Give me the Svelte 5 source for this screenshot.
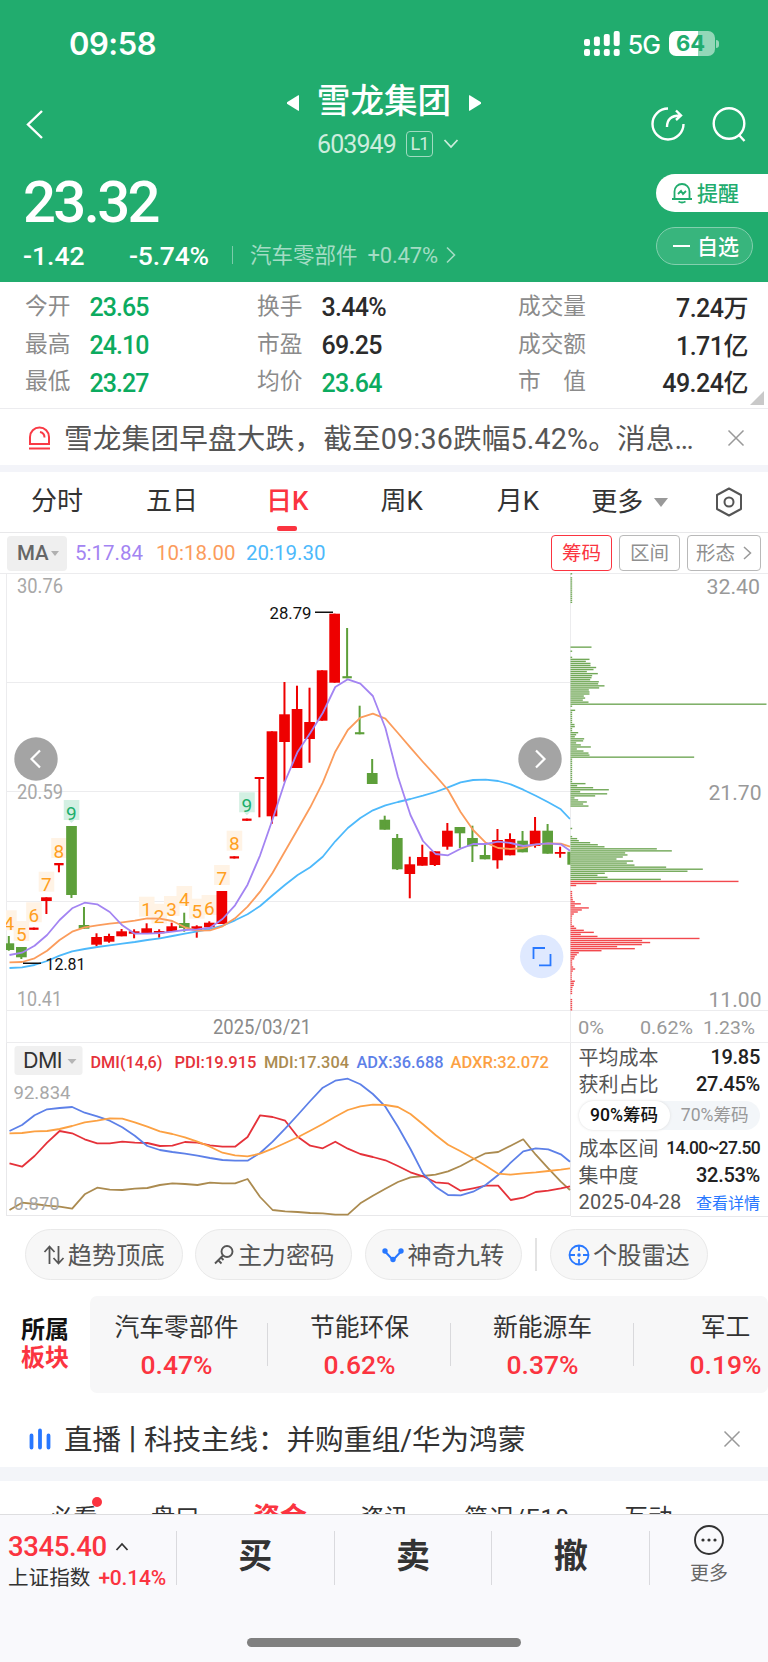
<script>
	const quotes = [
		[['今开', '23.65', true], ['换手', '3.44%'], ['成交量', '7.24万']],
		[['最高', '24.10', true], ['市盈', '69.25'], ['成交额', '1.71亿']],
		[['最低', '23.27', true], ['均价', '23.64', true], ['市　值', '49.24亿']]
	];
	const sectors = [
		{ name: '汽车零部件', pct: '0.47%' },
		{ name: '节能环保', pct: '0.62%' },
		{ name: '新能源车', pct: '0.37%' },
		{ name: '军工', pct: '0.19%' }
	];

	// body top, body bottom, high, low, up
	const candles = [
		[943.3, 950, 936, 950.7, 0],
		[947, 957.3, 947, 959, 0],
		[927.6, 929.8, 927.6, 929.8, 1],
		[897.3, 901, 897.3, 914, 1],
		[863, 865.3, 863, 872.3, 1],
		[826, 895, 826, 898, 0],
		[925, 928.7, 907, 928.7, 0],
		[937, 944.7, 933.3, 946.3, 1],
		[936, 941.7, 933.7, 942.7, 1],
		[931.3, 936.3, 929, 936.3, 1],
		[931.3, 933.7, 929.3, 938.3, 1],
		[928.3, 933, 923.3, 933, 1],
		[931, 933.3, 929.3, 937.7, 1],
		[926.3, 932, 922.7, 932, 1],
		[923, 928, 912.7, 931.7, 0],
		[926.3, 930.3, 925.3, 937.7, 1],
		[922.7, 927.3, 921.3, 927.3, 1],
		[891, 924, 891, 924, 1],
		[856.3, 858.5, 856.3, 858.5, 1],
		[818.6, 820.8, 818.6, 820.8, 1],
		[777, 779, 777, 817.3, 1],
		[731.3, 816.3, 731.3, 823.7, 1],
		[714.3, 742, 682, 781.7, 1],
		[709, 768, 685.7, 768, 1],
		[722, 739, 687.7, 762.7, 1],
		[670.3, 720.7, 670.3, 720.7, 1],
		[613.7, 682.7, 613.7, 682.7, 1],
		[676.2, 678.3, 628, 678.3, 0],
		[732.2, 734.3, 705.7, 734.3, 0],
		[773, 784, 759, 784, 0],
		[819.7, 829.7, 815.7, 829.7, 0],
		[838, 869.3, 834, 870, 0],
		[864.3, 874, 856.7, 898.3, 1],
		[857, 865.7, 844.7, 865.7, 1],
		[851.3, 865, 851.3, 866, 1],
		[830.7, 846.7, 823, 849.7, 1],
		[827, 833.3, 827, 848, 0],
		[838, 846.3, 825.7, 862, 0],
		[855, 859.3, 844.7, 859.3, 0],
		[840, 860.3, 829, 868.7, 1],
		[839, 855.3, 833.3, 855.3, 1],
		[840.7, 852.3, 831, 852.3, 0],
		[830.7, 846, 817, 847.7, 1],
		[830.7, 853.7, 824, 853.7, 0],
		[852, 853.8, 846.7, 857.7, 1],
		[851.7, 864.7, 851.7, 864.7, 0]
	];
	const cx = (i) => 8.8 + 12.53 * i;
	const thin = (c) => c[1] - c[0] < 2.5 && c[0] !== 852 && c[0] !== 931.3 && c[0] !== 931;
	const line = (ys) => ys.map((y, i) => `${Math.min(cx(i) + 0.7, 570)},${y}`).join(' ');
	const scaled = (ys) => ys.map((y) => +(1030 + y / 3).toFixed(1));

	const ma5 = [955, 952.7, 945.7, 935, 920, 908.3, 902.7, 904.3, 912, 925.3, 933.7, 933.7, 933, 931.7, 930, 929.3, 927.7, 919, 905.3, 884.7, 855.3, 819.3, 781, 751.7, 733, 713, 687, 679.3, 683.7, 696, 728, 776.7, 815, 841, 854, 855.3, 848.7, 844, 844, 841.7, 843, 846, 844.3, 843.3, 844.3, 850.7];
	const ma10 = [962.3, 962, 958.3, 950.7, 940, 931.7, 927.3, 925.3, 923.7, 922.3, 920.7, 918.3, 918.7, 921, 927.3, 930.7, 930.3, 926.3, 918.3, 906.7, 891.7, 872.7, 851, 829.3, 807.3, 782.7, 751.7, 730, 717.7, 713.7, 718.7, 733, 747.7, 762, 775.7, 790, 812, 830, 842.7, 848, 849, 848, 844.7, 843.3, 843.7, 846.7];
	const ma20 = [968, 967.3, 965, 961, 955.7, 951.3, 949, 947, 945.3, 943.7, 942, 940, 938.3, 936, 933.7, 931.3, 929, 925.7, 920.3, 914.3, 906, 895.3, 884.7, 875, 867.3, 856.7, 841.3, 828, 818, 810.3, 805.3, 802, 799, 795.7, 792, 787.3, 782.3, 780, 779.7, 781, 784.3, 789.7, 795.7, 802.3, 809.3, 819];

	const dmi = [
		{ color: '#ab8b50', ys: [540, 518, 522, 527, 530, 536, 493, 473, 479, 480, 476, 474, 465, 460, 462, 465, 458, 460, 460, 447, 501, 540, 544, 546, 549, 550, 554, 554, 520, 497, 476, 456, 442, 438, 434, 424, 408, 388, 370, 366, 347, 328, 374, 415, 455, 480] },
		{ color: '#e5323a', ys: [400, 410, 378, 338, 303, 310, 328, 340, 340, 335, 338, 339, 348, 347, 336, 338, 346, 350, 350, 321, 256, 261, 272, 320, 347, 355, 335, 356, 372, 381, 391, 408, 427, 439, 457, 460, 482, 475, 467, 467, 510, 503, 486, 482, 475, 469] },
		{ color: '#5d80e8', ys: [303, 285, 256, 238, 234, 231, 248, 259, 272, 292, 317, 348, 360, 366, 371, 377, 384, 390, 392, 392, 369, 335, 296, 255, 213, 173, 152, 146, 163, 192, 230, 290, 357, 430, 470, 495, 496, 485, 465, 435, 398, 364, 355, 358, 373, 395] },
		{ color: '#fca143', ys: [310, 309, 304, 303, 297, 288, 277, 272, 265, 266, 277, 290, 304, 312, 322, 335, 350, 368, 376, 379, 371, 356, 339, 322, 302, 282, 260, 240, 229, 224, 225, 231, 252, 283, 315, 344, 364, 385, 407, 431, 434, 430, 427, 423, 419, 415] }
	];

	// nine-turn counters: candle index, number, text centre
	const marks = [
		[0, 4, 923.3], [1, 5, 934], [2, 6, 915.3], [3, 7, 884.7], [4, 8, 851], [5, 9, 813],
		[11, 1, 909.7], [12, 2, 916.7], [13, 3, 909], [14, 4, 899], [15, 5, 911.7], [16, 6, 908],
		[17, 7, 878], [18, 8, 843.7], [19, 9, 805.3]
	];

	// cost distribution, grouped by starting price step
	const chipGroups = [
		[0, [5]],
		[2, Array(13).fill(5)],
		[36, [63, 0, 5, 0, 0, 5, 57, 46, 60, 60, 77, 69, 49, 82, 65, 63, 59, 85, 83, 102, 86, 55, 57, 57, 40, 44, 37, 54, 588, 5, 0, 14, 5, 5, 5, 5, 5, 5, 12, 13, 5, 5, 23, 17, 13, 41, 38, 17, 31, 61, 19, 39, 54, 57, 371]],
		[91, Array(12).fill(5)],
		[103, [45, 20, 68, 115, 29, 110, 74, 12, 23, 49, 38, 54]],
		[125, [5, 0, 0, 0, 5, 20, 25, 59, 82, 102, 259, 304, 164, 171, 157, 138, 188, 169, 192, 287, 397, 351, 103, 81, 111, 271, 504, 78, 17]],
		[156, [5, 5, 5, 6, 7, 13, 31, 13, 55, 34, 22, 10, 5, 4, 4, 4, 4, 11, 17, 40, 70, 31, 81, 387, 215, 239, 214, 140, 193, 93, 25, 19, 13, 11, 5, 5, 5, 8, 14, 7, 4, 4, 4, 4, 13, 10, 10, 6, 5, 5, 5]],
		[209, Array(6).fill(5)]
	];
	const chips = chipGroups.flatMap(([start, widths]) =>
		widths.map((w, n) => ({ k: start + n, w: w / 3 }))
	);
</script>

{#snippet label(text, x, y, size, width, fill, weight)}
	<text {x} {y} {fill} font-size={size} textLength={width} lengthAdjust="spacingAndGlyphs" font-weight={weight ?? 400}>{text}</text>
{/snippet}

<div class="page">
	<header>
		<div class="status">
			<span class="clock">09:58</span>
			<div class="status-right">
				<svg class="signal" width="36" height="26" viewBox="0 0 36 26">
					{#each [8, 5.5, 3, 0] as top, i}
						<rect x={i * 9.9} y={top} width="6" height={15 - top} rx="2" />
						<rect x={i * 9.9} y="18" width="6" height="7" rx="2" />
					{/each}
				</svg>
				<span class="net">5G</span>
				<div class="battery">64</div>
				<i class="nub"></i>
			</div>
		</div>
		<nav>
			<svg class="back" width="20" height="32" viewBox="0 0 20 32"><path d="M17 3L3 16.500L17 30" /></svg>
			<div class="title">
				<div class="name">
					<svg width="12" height="16" viewBox="0 0 12 16"><path d="M11.500 1.500v13L1 8z" fill="#fff" stroke="#fff" stroke-linejoin="round" /></svg>
					<h1>雪龙集团</h1>
					<svg width="12" height="16" viewBox="0 0 12 16"><path d="M.5 1.500v13L11 8z" fill="#fff" stroke="#fff" stroke-linejoin="round" /></svg>
				</div>
				<div class="code">
					<span>603949</span><b>L1</b>
					<svg width="16" height="12" viewBox="0 0 16 12"><path d="M1.500 2L8 9L14.500 2" /></svg>
				</div>
			</div>
			<div class="actions">
				<svg width="36" height="38" viewBox="0 0 36 38"><path d="M18 3.500A15.500 15.500 0 1 0 33.500 19M17 22C17 14 21 10.500 30 10.500M26 5.500L31 10.500L26 15" /></svg>
				<svg width="36" height="38" viewBox="0 0 36 38"><circle cx="18" cy="18.500" r="15.300" /><path d="M28 30L33.500 36" /></svg>
			</div>
		</nav>
		<div class="price-area">
			<div class="price-left">
				<div class="price">23.32</div>
				<div class="change">
					<span class="diff">-1.42</span><span class="rate">-5.74%</span><i></i>
					<span class="industry">汽车零部件</span><span class="industry-rate">+0.47%</span>
					<svg width="12" height="18" viewBox="0 0 12 18"><path d="M2 1.500L9.500 9L2 16.500" /></svg>
				</div>
			</div>
			<div class="price-right">
				<div class="remind">
					<svg width="22" height="22" viewBox="0 0 22 22"><path d="M3.500 16V9.500a7.500 7.500 0 0 1 15 0V16M1 17h20M7.500 19.500q3.500 2 7 0M7 12l3-3 2 3 3-3" /></svg>
					<span>提醒</span>
				</div>
				<div class="watch"><i></i><span>自选</span></div>
			</div>
		</div>
	</header>

	<section class="quotes">
		{#each quotes as row}
			<div class="quote-row">
				{#each row as [name, value, down]}
					<div class="quote"><span>{name}</span><b class:down>{value}</b></div>
				{/each}
			</div>
		{/each}
		<i class="corner"></i>
	</section>

	<section class="news">
		<svg width="23" height="24" viewBox="0 0 23 24" class="alarm"><path d="M2 18V11a9.500 9.500 0 0 1 19 0v7zM1 22.500h21M12 6q4.500 1 4.500 5.500" /></svg>
		<p>雪龙集团早盘大跌，截至09:36跌幅5.42%。消息…</p>
		<svg class="close" width="18" height="18" viewBox="0 0 18 18"><path d="M1.500 1.500l15 15M16.500 1.500l-15 15" /></svg>
	</section>

	<section class="periods">
		<span>分时</span><span>五日</span><span class="on">日K</span><span>周K</span><span>月K</span>
		<span class="more">更多<i></i></span>
		<svg width="28" height="30" viewBox="0 0 28 30"><path d="M14 1.500L26 8v14L14 28.500L2 22V8z" stroke-linejoin="round" /><circle cx="14" cy="15" r="4.500" /></svg>
	</section>

	<section class="ma-bar">
		<div class="select">MA<i></i></div>
		<span class="ma5">5:17.84</span><span class="ma10">10:18.00</span><span class="ma20">20:19.30</span>
		<div class="chip-tabs">
			<span class="on">筹码</span><span>区间</span>
			<span>形态<svg width="9" height="16" viewBox="0 0 9 16"><path d="M1 2l6.500 6L1 14" /></svg></span>
		</div>
	</section>

	<section class="charts">
		<svg width="768" height="470" viewBox="0 573 768 470">
			<g stroke="#ececee">
				<path d="M0 573.500H768M6 682.500H570M6 791.500H570M6 901.500H570M6 1010.500H768M6 1042.500H768M6.500 573V1043M570.500 573V1043" />
			</g>
			{@render label('30.76', 17, 593, 19.5, 46, '#a8a8a8')}
			{@render label('20.59', 17, 799, 19.5, 46, '#a8a8a8')}
			{@render label('10.41', 17, 1005.7, 19.5, 45, '#a8a8a8')}
			<clipPath id="plot"><rect x="6" y="573" width="564.500" height="470" /></clipPath>
			<g clip-path="url(#plot)">
				{#each marks as [i, n, y]}
					<rect x={cx(i) - 7.7} y={y - 13} width="15.600" height="20" fill={n === 9 ? '#d3f0e3' : '#fff3e5'} />
					{#if n === 9}<path d={`M${cx(i) - 3} ${y + 7}h6l-3 3z`} fill="#d3f0e3" />{/if}
				{/each}
				{#each candles as c, i}
					<g fill={c[4] ? '#ee0000' : '#5d9f3a'}>
						<rect x={cx(i) - (thin(c) ? 4.7 : 5.3)} y={c[0]} width={thin(c) ? 9.4 : 10.7} height={c[1] - c[0]} />
						<rect x={cx(i) - 1} y={c[2]} width="2" height={c[3] - c[2]} />
					</g>
				{/each}
				{#each marks as [i, n, y]}
					<text x={cx(i)} y={y + 6.5} text-anchor="middle" font-size="19" fill={n === 9 ? '#1cae6b' : '#ff9f1f'}>{n}</text>
				{/each}
				<g fill="none" stroke-width="1.800" stroke-linejoin="round">
					<polyline points={line(ma20)} stroke="#4db9fb" />
					<polyline points={line(ma10)} stroke="#fb9c5c" />
					<polyline points={line(ma5)} stroke="#a384f2" />
				</g>
			</g>
			<path d="M315 612.300H333M23 963.300H41" stroke="#111" stroke-width="1.600" />
			{@render label('28.79', 269.5, 618.8, 17, 42, '#111')}
			{@render label('12.81', 45.5, 969.8, 17, 40, '#111')}
			{@render label('2025/03/21', 213, 1034, 19.5, 98, '#8a8a8a')}

			{#each chips as { k, w }}
				<rect x="570.500" y={573.1 + k * 2.0373} width={w} height="1.400" fill={k > 150 ? '#f2494e' : '#72a858'} />
			{/each}
			{@render label('32.40', 706.5, 594, 21, 53.5, '#999')}
			{@render label('21.70', 708.5, 800, 21, 53, '#999')}
			{@render label('11.00', 708.5, 1006.7, 21, 53, '#999')}
			{@render label('0%', 578, 1034, 19, 26, '#999')}
			{@render label('0.62%', 640, 1034, 19, 53, '#999')}
			{@render label('1.23%', 703, 1034, 19, 52, '#999')}

			<circle cx="36" cy="759" r="21.700" fill="#a4a4a4" />
			<circle cx="540" cy="759" r="21.700" fill="#a4a4a4" />
			<path d="M40 750.500L31.500 759L40 767.500M536 750.500L544.500 759L536 767.500" fill="none" stroke="#fff" stroke-width="2.200" />
			<circle cx="541.700" cy="956.500" r="21.700" fill="#dfe9ff" />
			<path d="M545 948H533.500V959M550.500 954V965.300H539" fill="none" stroke="#2878ff" stroke-width="1.800" />
		</svg>
	</section>

	<section class="lower">
		<svg width="571" height="174" viewBox="0 1043 571 174">
			<path d="M6.500 1043V1216M570.500 1043V1216M6 1215.500H571" stroke="#e8e8ea" />
			<rect x="14.500" y="1046" width="68" height="29" rx="3" fill="#f0f0f0" />
			<path d="M67.500 1059h9l-4.500 5z" fill="#b5b5b5" />
			<text x="23" y="1067.500" font-size="21.500" textLength="39.500" fill="#333" class="sf">DMI</text>
			{@render label('DMI(14,6)', 90.5, 1068, 16.5, 72, '#e5323a', 500)}
			{@render label('PDI:19.915', 174.5, 1068, 16.5, 82, '#e5323a', 500)}
			{@render label('MDI:17.304', 264, 1068, 16.5, 85, '#ab8b50', 500)}
			{@render label('ADX:36.688', 356.5, 1068, 16.5, 87, '#5d80e8', 500)}
			{@render label('ADXR:32.072', 450.5, 1068, 16.5, 98.5, '#fca143', 500)}
			{#each dmi as d}
				<polyline points={line(scaled(d.ys))} fill="none" stroke={d.color} stroke-width="1.800" stroke-linejoin="round" />
			{/each}
			{@render label('92.834', 13.5, 1099, 19, 57, '#a8a8a8')}
			{@render label('0.870', 13.5, 1209.5, 19, 46, '#a8a8a8')}
		</svg>
		<aside>
			<div class="cost"><span>平均成本</span><b>19.85</b></div>
			<div class="cost"><span>获利占比</span><b>27.45%</b></div>
			<div class="toggle"><b>90%筹码</b><span>70%筹码</span></div>
			<div class="cost"><span>成本区间</span><b class="range">14.00~27.50</b></div>
			<div class="cost"><span>集中度</span><b>32.53%</b></div>
			<div class="cost"><em>2025-04-28</em><a href="#detail">查看详情</a></div>
		</aside>
	</section>

	<section class="tools">
		<div>
			<svg width="22" height="22" viewBox="0 0 22 22"><path d="M6.500 20V3M1.500 8l5-5.500L11.500 8M15.500 2v17M10.500 14l5 5.500 5-5.500" stroke="#555" stroke-width="1.800" /></svg><span>趋势顶底</span>
		</div>
		<div>
			<svg width="22" height="22" viewBox="0 0 22 22"><g stroke="#555" stroke-width="1.900"><circle cx="14" cy="7.500" r="5.500" /><path d="M10 11.500L2 19.500M5 16l3.500 3.500M8 13.500l2.500 2.500" /></g></svg><span>主力密码</span>
		</div>
		<div>
			<svg width="22" height="22" viewBox="0 0 22 22"><path d="M3 7.500L11 16L19 7.500" stroke="#2878ff" stroke-width="2" /><g fill="#2878ff"><circle cx="3" cy="7" r="2.700" /><circle cx="11" cy="15.500" r="2.700" /><circle cx="19" cy="7" r="2.700" /></g></svg><span>神奇九转</span>
		</div>
		<i></i>
		<div>
			<svg width="22" height="22" viewBox="0 0 22 22"><g stroke="#2878ff" stroke-width="1.800"><circle cx="11" cy="11" r="9.500" /><path d="M11 1v6M11 15v6M1 11h6M15 11h6" /></g><circle cx="11" cy="11" r="1.800" fill="#2878ff" /></svg><span>个股雷达</span>
		</div>
	</section>

	<section class="sectors">
		<div class="sector-title">所属<b>板块</b></div>
		<div class="sector-list">
			{#each sectors as s}
				<div class="sector"><span>{s.name}</span><b>{s.pct}</b></div>
			{/each}
		</div>
	</section>

	<section class="live">
		<svg width="22" height="22" viewBox="0 0 22 22"><path d="M2.500 7.500V19.500M11 2.500V19.500M19.500 7.500V19.500" stroke="#2878ff" stroke-width="3.800" stroke-linecap="round" /></svg>
		<p>直播<span>丨</span>科技主线：并购重组/华为鸿蒙</p>
		<svg class="close" width="18" height="18" viewBox="0 0 18 18"><path d="M1.500 1.500l15 15M16.500 1.500l-15 15" /></svg>
	</section>

	<section class="tabs">
		<span class="dot">必看</span><span>盘口</span><span class="on">资金</span><span>资讯</span><span>简况/F10</span><span>互动</span>
	</section>

	<footer>
		<div class="bar">
			<div class="index">
				<div class="points">3345.40<svg width="14" height="10" viewBox="0 0 14 10"><path d="M1.500 8L7 2L12.500 8" /></svg></div>
				<div class="sub">上证指数<b>+0.14%</b></div>
			</div>
			<div class="trade">买</div>
			<div class="trade">卖</div>
			<div class="trade">撤</div>
			<div class="menu">
				<svg width="32" height="32" viewBox="0 0 32 32"><circle cx="16" cy="16" r="14" /><g fill="#333" stroke="none"><circle cx="10" cy="16" r="1.600" /><circle cx="16" cy="16" r="1.600" /><circle cx="22" cy="16" r="1.600" /></g></svg>
				更多
			</div>
		</div>
		<i class="home"></i>
	</footer>
</div>

<style>
	:global(body) {
		margin: 0;
		background: #fff;
	}
	.page {
		width: 768px;
		height: 1662px;
		overflow: hidden;
		display: flex;
		flex-direction: column;
		font-family: Roboto, 'Noto Sans CJK SC', sans-serif;
		color: #333;
	}
	.page * {
		box-sizing: border-box;
	}
	.page > * {
		flex: none;
	}
	svg {
		display: block;
		fill: none;
		flex: none;
	}
	b,
	em {
		font-weight: 500;
		font-style: normal;
	}
	p,
	h1 {
		margin: 0;
	}
	.sf {
		font-family: Inter, sans-serif;
	}

	header {
		height: 282px;
		background: #21ac6e;
		color: #fff;
	}
	header svg {
		stroke: #fff;
		stroke-width: 2.4;
	}
	.status {
		height: 87px;
		display: flex;
		justify-content: space-between;
		align-items: center;
		padding: 0 49px 0 69px;
		font-family: Inter, sans-serif;
	}
	.status .signal {
		fill: #fff;
		stroke: none;
	}
	.clock {
		font-size: 31px;
		font-weight: 600;
		letter-spacing: -0.5px;
	}
	.status-right {
		display: flex;
		align-items: center;
	}
	.net {
		font-size: 25px;
		font-weight: 500;
		margin: 2px 9px 0 8px;
		letter-spacing: -1px;
	}
	.battery {
		width: 46px;
		height: 25px;
		border-radius: 7px;
		background: linear-gradient(90deg, #fff 62%, #93d7b8 62%);
		color: #21ac6e;
		font-size: 22px;
		font-weight: 700;
		line-height: 25px;
		text-align: center;
		padding-right: 3px;
	}
	.nub {
		width: 3px;
		height: 8px;
		border-radius: 0 3px 3px 0;
		background: #93d7b8;
		margin-left: 1px;
	}
	nav {
		height: 85px;
		display: grid;
		grid-template-columns: 1fr 300px 1fr;
	}
	.back {
		margin: 21px 0 0 25px;
	}
	.name {
		display: flex;
		justify-content: center;
		align-items: center;
		gap: 18px;
		height: 31px;
	}
	h1 {
		font-size: 33.6px;
		font-weight: 500;
		line-height: 29px;
		padding-bottom: 2px;
	}
	.code {
		display: flex;
		align-items: center;
		height: 28px;
		margin: 12px 0 0 83px;
		color: #cdeddd;
		font-size: 25px;
		letter-spacing: -0.9px;
	}
	.code b {
		width: 27px;
		height: 26px;
		margin: 0 10px 0 10px;
		border: 1.5px solid #9fdbc0;
		border-radius: 4px;
		font-size: 18px;
		line-height: 23px;
		text-align: center;
		font-weight: 400;
	}
	.code svg {
		stroke: #cdeddd;
		stroke-width: 1.8;
	}
	.actions {
		display: flex;
		justify-content: flex-end;
		gap: 25px;
		padding: 18px 21px 0 0;
	}
	.price-area {
		display: flex;
		justify-content: space-between;
	}
	.price-left {
		padding-left: 23px;
	}
	.price {
		font-size: 58px;
		font-weight: 500;
		line-height: 60px;
		letter-spacing: -2.6px;
	}
	.change {
		display: flex;
		align-items: center;
		height: 40px;
		font-size: 26.5px;
		font-weight: 500;
		margin-top: 3px;
		white-space: nowrap;
	}
	.diff {
		width: 106px;
	}
	.rate {
		width: 84px;
		letter-spacing: -0.2px;
	}
	.change i {
		width: 1px;
		height: 18px;
		background: #7accaa;
		margin: 0 17px 0 19px;
	}
	.industry,
	.industry-rate {
		font-size: 21.5px;
		font-weight: 400;
		color: #a3dcc4;
	}
	.industry {
		padding-bottom: 4px;
	}
	.industry-rate {
		font-size: 22px;
		margin: 0 7px 0 10px;
		letter-spacing: -0.2px;
	}
	.change svg {
		stroke: #a3dcc4;
		stroke-width: 1.6;
	}
	.price-right {
		width: 112px;
	}
	.remind,
	.watch {
		height: 38px;
		display: flex;
		align-items: center;
		font-size: 21px;
		font-weight: 500;
	}
	.remind span,
	.watch span {
		padding-bottom: 3px;
	}
	.remind {
		margin-top: 2px;
		padding-left: 15px;
		gap: 4px;
		border-radius: 19px 0 0 19px;
		background: #fff;
		color: #21ac6e;
	}
	.remind svg {
		stroke: #21ac6e;
		stroke-width: 1.8;
	}
	.watch {
		margin-top: 15px;
		width: 97px;
		padding-left: 16px;
		gap: 7px;
		border: 1px solid #83cfae;
		border-radius: 19px;
		background: #38b57d;
	}
	.watch i {
		width: 17px;
		height: 2px;
		background: #fff;
	}

	.quotes {
		position: relative;
		height: 127px;
		padding-top: 5px;
		border-bottom: 1.5px solid #ececef;
	}
	.quote-row {
		display: grid;
		grid-template-columns: 232px 261px 230px;
		height: 37.8px;
		padding-left: 25px;
	}
	.quote {
		display: flex;
		align-items: center;
		font-size: 22.7px;
		color: #8b8b8b;
	}
	.quote span {
		padding-bottom: 3px;
	}
	.quote b {
		margin-left: 19px;
		font-size: 25px;
		letter-spacing: -0.9px;
		color: #2b2b2b;
		padding-top: 4px;
	}
	.quote:nth-child(2) b {
		letter-spacing: -0.7px;
	}
	.quote:last-child b {
		margin-left: auto;
		padding-top: 0;
		letter-spacing: -0.5px;
	}
	.quote b.down {
		color: #0cab5f;
	}
	.corner {
		position: absolute;
		right: 4px;
		bottom: 3px;
		border-left: 14px solid transparent;
		border-bottom: 14px solid #c9c9c9;
	}
	.news,
	.live {
		display: flex;
		align-items: center;
		font-size: 28.6px;
	}
	.news {
		height: 56px;
		padding: 1px 23px 0 28px;
		color: #555;
	}
	.alarm {
		stroke: #f93a45;
		stroke-width: 2;
	}
	.news p {
		margin-left: 13px;
		padding-bottom: 3px;
		letter-spacing: 0.2px;
	}
	.close {
		margin-left: auto;
		stroke: #999;
		stroke-width: 1.5;
	}

	.periods {
		height: 68px;
		display: flex;
		align-items: center;
		padding: 0 25px 0 31px;
		border-top: 7px solid #f3f4f9;
		border-bottom: 1.5px solid #e8e8ea;
		font-size: 26px;
	}
	.periods span {
		height: 100%;
		line-height: 59px;
		white-space: nowrap;
	}
	.periods span:nth-child(2) {
		margin-left: 63px;
	}
	.periods span:nth-child(3) {
		margin-left: 68px;
	}
	.periods span:nth-child(4) {
		margin-left: 72px;
	}
	.periods span:nth-child(5) {
		margin-left: 74px;
	}
	.periods .more {
		display: flex;
		align-items: center;
		gap: 11px;
		margin-left: 52px;
	}
	.more i {
		border: 7px solid transparent;
		border-top: 9px solid #999;
		border-bottom: 0;
	}
	.periods svg {
		margin-left: auto;
		stroke: #555;
		stroke-width: 2;
	}
	.periods .on {
		position: relative;
		color: #fb3440;
		font-weight: 500;
	}
	.on::after {
		content: '';
		position: absolute;
		left: 11px;
		bottom: 1px;
		width: 20px;
		height: 5px;
		border-radius: 2px;
		background: #fb3440;
	}

	.ma-bar {
		height: 40px;
		display: flex;
		align-items: center;
		padding: 0 7px;
		font-size: 20.5px;
	}
	.select {
		display: flex;
		align-items: center;
		gap: 2px;
		width: 60px;
		height: 35px;
		margin-right: 8px;
		padding-left: 10px;
		border-radius: 4px;
		background: #efefef;
		color: #666;
		font-size: 20.5px;
		font-weight: 500;
	}
	.select i {
		border: 4px solid transparent;
		border-top: 5px solid #b0b0b0;
		border-bottom: 0;
	}
	.ma5 {
		color: #a384f2;
		width: 81px;
	}
	.ma10 {
		color: #fb9c5c;
		width: 90px;
	}
	.ma20 {
		color: #4db9fb;
	}
	.chip-tabs {
		display: flex;
		gap: 7px;
		margin-left: auto;
	}
	.chip-tabs span {
		display: flex;
		align-items: center;
		justify-content: center;
		width: 61px;
		height: 36px;
		padding-bottom: 3px;
		border: 1.5px solid #b9b9b9;
		border-radius: 4px;
		font-size: 19.5px;
		color: #8f8f8f;
	}
	.chip-tabs span:last-child {
		width: 74px;
		gap: 8px;
	}
	.chip-tabs .on {
		position: static;
		color: #fb3440;
		border-color: #fb3440;
	}
	.chip-tabs .on::after {
		display: none;
	}
	.chip-tabs svg {
		stroke: #999;
		stroke-width: 1.5;
		margin-top: 2px;
	}
	.charts {
		height: 470px;
	}

	.lower {
		height: 174px;
		display: flex;
	}
	aside {
		flex: 1;
		padding: 0 8px 0 7.5px;
		border-bottom: 1.5px solid #e8e8ea;
	}
	.cost {
		display: flex;
		justify-content: space-between;
		align-items: center;
		height: 27px;
		font-size: 20px;
		color: #555;
		white-space: nowrap;
	}
	.cost b {
		color: #222;
		letter-spacing: -0.3px;
	}
	.cost .range {
		font-size: 17.5px;
		letter-spacing: -0.65px;
	}
	.cost em {
		font-weight: 400;
		font-size: 20px;
		letter-spacing: 0.2px;
	}
	.cost a {
		font-size: 16px;
		color: #2878ff;
		text-decoration: none;
	}
	.toggle {
		display: flex;
		height: 29px;
		margin: 4px 0;
		border-radius: 15px;
		background: #f3f6f9;
		font-size: 17.6px;
		line-height: 28px;
		text-align: center;
		color: #999;
		white-space: nowrap;
	}
	.toggle b {
		width: 91px;
		border-radius: 15px;
		background: #fff;
		box-shadow: 0 0 3px #ddd;
		color: #111;
	}
	.toggle span {
		flex: 1;
	}

	.tools {
		height: 76px;
		padding: 12px 0 0 25px;
		display: flex;
		gap: 12.3px;
		font-size: 24.2px;
		color: #555;
	}
	.tools div {
		width: 157.5px;
		height: 51px;
		display: flex;
		align-items: center;
		justify-content: center;
		gap: 3px;
		border: 1px solid #e9e9e9;
		border-radius: 26px;
		background: #f7f7f7;
	}
	.tools span {
		padding-bottom: 2px;
	}
	.tools i {
		width: 1.5px;
		height: 33px;
		margin: 9px 1px 0 1px;
		background: #e3e3e3;
	}

	.sectors {
		height: 104px;
		display: flex;
		padding-top: 3px;
	}
	.sector-title {
		width: 90px;
		padding: 20px 0 0 21px;
		font-size: 24px;
		font-weight: 700;
		line-height: 28px;
		color: #111;
	}
	.sector-title b {
		display: block;
		font-weight: 700;
		color: #fb3440;
	}
	.sector-list {
		width: 678px;
		height: 97px;
		display: flex;
		overflow: hidden;
		border-radius: 7px;
		background: #f7f7f8;
	}
	.sector {
		position: relative;
		flex: none;
		width: 183px;
		text-align: center;
		font-size: 24.8px;
		line-height: 36px;
		padding-top: 14px;
	}
	.sector:first-child {
		margin-left: -5px;
	}
	.sector:not(:last-child)::after {
		content: '';
		position: absolute;
		right: 0;
		top: 27px;
		width: 1.5px;
		height: 43px;
		background: #d9d9dc;
	}
	.sector b {
		display: block;
		font-size: 26.5px;
		letter-spacing: 0;
		color: #fb3440;
		padding-top: 1px;
	}

	.live {
		height: 70px;
		padding: 13px 27px 0 29px;
		color: #333;
	}
	.live p {
		margin-left: 13px;
		padding-bottom: 2px;
		letter-spacing: -0.12px;
	}
	.live p span {
		margin: 0 -2.7px;
	}
	.tabs {
		height: 47px;
		border-top: 14px solid #f3f5f9;
		display: flex;
		padding: 20px 0 0 49px;
		font-size: 24.2px;
		line-height: 34px;
		overflow: hidden;
		white-space: nowrap;
	}
	.tabs span {
		position: relative;
		width: 104px;
	}
	.tabs span:first-child,
	.tabs span:nth-child(2) {
		width: 102px;
	}
	.tabs span:nth-child(3) {
		width: 107px;
	}
	.tabs span:nth-child(5) {
		width: 160px;
		letter-spacing: 1.2px;
	}
	.tabs .on {
		font-size: 27px;
		font-weight: 700;
		color: #fb3440;
	}
	.tabs .on::after {
		display: none;
	}
	.dot::before {
		content: '';
		position: absolute;
		left: 43px;
		top: -4px;
		width: 10px;
		height: 10px;
		border-radius: 50%;
		background: #fb3440;
	}

	footer {
		height: 149px;
		background: #f9f9fc;
		border-top: 1.5px solid #dedee0;
		position: relative;
	}
	.bar {
		display: flex;
		padding-top: 16px;
	}
	.index {
		width: 176px;
		padding-left: 8px;
		margin-top: -1px;
		color: #333;
	}
	.points {
		display: flex;
		align-items: center;
		gap: 8px;
		font-size: 27.5px;
		font-weight: 500;
		letter-spacing: -0.4px;
		line-height: 34px;
		color: #fb3440;
	}
	.points svg {
		stroke: #333;
		stroke-width: 1.8;
	}
	.sub {
		font-size: 20.6px;
		line-height: 28px;
		white-space: nowrap;
	}
	.sub b {
		margin-left: 8px;
		color: #fb3440;
		letter-spacing: -0.2px;
		font-size: 21px;
	}
	.trade {
		width: 157.7px;
		height: 54px;
		border-left: 1.5px solid #dadade;
		font-size: 34px;
		font-weight: 700;
		line-height: 51px;
		text-align: center;
	}
	.menu {
		height: 54px;
		flex: 1;
		border-left: 1.5px solid #dadade;
		display: flex;
		flex-direction: column;
		align-items: center;
		font-size: 19px;
		line-height: 28px;
		color: #666;
	}
	.menu svg {
		margin: -7px 0 4px;
		stroke: #333;
		stroke-width: 1.9;
	}
	.home {
		position: absolute;
		left: 247px;
		top: 122.5px;
		width: 274px;
		height: 9.5px;
		border-radius: 5px;
		background: #808080;
	}
</style>
